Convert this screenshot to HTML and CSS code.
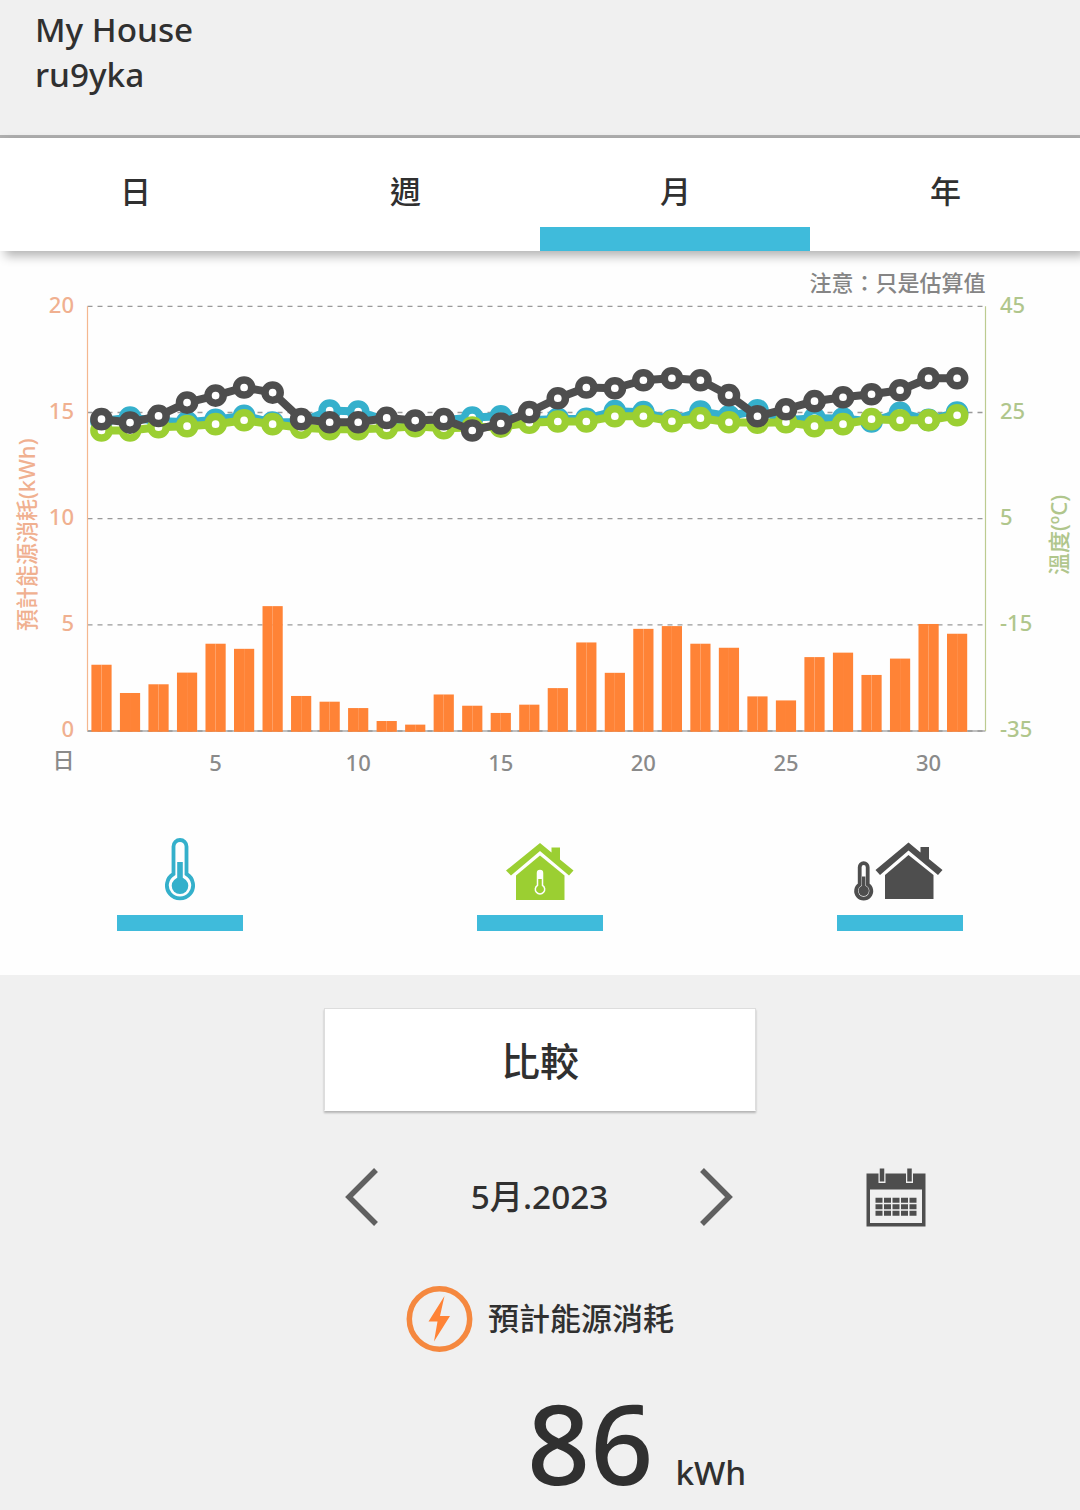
FILE: index.html
```html
<!DOCTYPE html>
<html lang="zh-Hant">
    <head>
        <meta charset="UTF-8" />
        <meta name="viewport" content="width=device-width, initial-scale=1.0" />
        <title>My House</title>
        <link rel="stylesheet" href="styles.css">
    </head>
    <body>
        <header class="header">
            <p>My House</p>
            <p>ru9yka</p>
        </header>

        <nav class="tabs">
            <a class="tab">日</a>
            <a class="tab">週</a>
            <a class="tab active">月</a>
            <a class="tab">年</a>
        </nav>

        <main class="panel">
            <svg class="chart" viewBox="0 0 1080 540">
                <text class="note" x="985.5" y="40">注意：只是估算值</text>
                <g class="grid"></g>
                <g class="bars"></g>
                <g class="lines"></g>
                <text class="label unit" x="52.5" y="517">日</text>
                <text class="title left" transform="translate(34.500 380) rotate(-90)">預計能源消耗(kWh)</text>
                <text class="title right" transform="translate(1066.500 324) rotate(-90)">溫度(ºC)</text>
            </svg>

            <div class="legend">
                <div class="item">
                    <svg class="icon set" viewBox="0 0 32 64">
                        <path class="tube" d="M9.5 37V9.500a6.5 6.5 0 0 1 13 0V37a13.1 13.1 0 1 1-13 0z" />
                        <circle cx="16" cy="48.8" r="8.3" />
                        <path d="M13.2 25h5.6V44h-5.6z" />
                    </svg>
                </div>
                <div class="item">
                    <svg class="icon house" viewBox="0 0 68 60">
                        <path d="M34 1 45.5 10.500V5.500H54V17.500L67.500 28.500 63 33.500 34 9 5 33.500 0 28.500z" />
                        <path d="M34 13.500 58.500 33.500V58H10V33.500z" />
                        <path class="bulb" d="M31.500 43.300V31a2.500 2.500 0 0 1 5 0v12.300a4.700 4.700 0 1 1-5 0z" />
                        <path class="top" d="M31.500 37v-6a2.500 2.500 0 0 1 5 0v6z" />
                    </svg>
                </div>
                <div class="item">
                    <svg class="icon outdoor" viewBox="0 0 90 60">
                        <path class="tube" d="M6.700 42.500V25.200a4 4 0 0 1 8 0v17.300a7.600 7.600 0 1 1-8 0z" />
                        <circle cx="10.700" cy="48.700" r="5.200" />
                        <path d="M9 34.500h3.400v12H9z" />
                        <path d="M55.500 0.500 67.500 10.500V5H76V17L89.500 28 85 33 55.500 8.500 27 33 22.500 28z" />
                        <path d="M55.500 13 80.500 33V57H32V33z" />
                    </svg>
                </div>
            </div>
        </main>

        <section class="summary">
            <button class="compare">比較</button>

            <div class="period">
                <svg class="arrow" viewBox="0 0 34 60">
                    <path d="M31 3 4 30l27 27" />
                </svg>
                <span class="month">5月.2023</span>
                <svg class="arrow" viewBox="0 0 34 60">
                    <path d="M3 3l27 27L3 57" />
                </svg>
                <svg class="calendar" viewBox="0 0 60 60">
                    <path d="M.5 5.500h59v53H.5zM4 21.500v33.500h52V21.500z" fill-rule="evenodd" />
                    <path class="pins" d="M16 0v15M43.500 0v15" />
                    <path class="rings" d="M16 .5v13M43.500 .5v13" />
                    <path class="days" d="M9.500 32.200h41M9.500 38.700h41M9.500 45.200h41" />
                </svg>
            </div>

            <div class="usage">
                <svg class="bolt" viewBox="0 0 66 66">
                    <circle cx="33" cy="33" r="30.200" />
                    <path d="M38 10 22 35.500h9L27.500 55.500 43.500 30h-10z" />
                </svg>
                <span>預計能源消耗</span>
            </div>

            <div class="total">
                <span class="value">86</span>
                <span class="kwh">kWh</span>
            </div>
        </section>

        <script src="script.js"></script>
    </body>
</html>
```
FILE: styles.css
```css
* {
    margin: 0;
    padding: 0;
    box-sizing: border-box;
}
body {
    background: #f0f0f0;
    color: #303030;
    font-family: 'Noto Sans', 'Noto Sans CJK TC', sans-serif;
    font-weight: 500;
}
svg {
    display: block;
}
.header {
    height: 138px;
    padding: 7px 35px 0;
    border-bottom: 3px solid #b0b0b0;
    font-size: 33.3px;
    line-height: 45px;
}
.tabs {
    height: 113px;
    display: flex;
    position: relative;
    background: #fff;
    box-shadow: 5px 5px 10px rgba(0, 0, 0, 0.3);
}
.tab {
    flex: 1;
    padding: 0 0 10px 1px;
    display: flex;
    justify-content: center;
    align-items: center;
    font-size: 31px;
    border-bottom: 0 solid #3fbbdb;
}
.tab.active {
    padding-top: 16px;
    padding-bottom: 2px;
    border-bottom-width: 24px;
}
.panel {
    height: 724px;
    background: #fefefe;
}

/* chart */
.chart {
    width: 1080px;
    height: 540px;
}
.note {
    font-size: 22px;
    fill: #858585;
    text-anchor: end;
}
.label {
    font-size: 22px;
    fill: #8a8a8a;
}
.title {
    font-size: 22px;
}
.left {
    fill: #f0b090;
}
.right {
    fill: #b0c68c;
}
.label.left {
    text-anchor: end;
}
.label.day {
    text-anchor: middle;
}
.rule {
    stroke: #999;
    stroke-width: 1.3;
    stroke-dasharray: 5 5;
}
.base {
    stroke: #aaa;
    stroke-width: 1.6;
}
.axis-left {
    stroke: #f5b78f;
    stroke-width: 1.2;
}
.axis-right {
    stroke: #bccb90;
    stroke-width: 1.2;
}
.bars {
    fill: #ff8336;
}
.lines {
    stroke-width: 7.5;
}
.lines polyline {
    fill: none;
    stroke-width: 8;
    stroke-linejoin: round;
}
.lines circle {
    fill: #fff;
}
.blue {
    stroke: #35b0cc;
}
.lime {
    stroke: #9bcf32;
}
.dark {
    stroke: #4e4e4e;
}

/* legend */
.legend {
    height: 140px;
    display: flex;
}
.item {
    flex: 1;
    display: flex;
    flex-direction: column;
    align-items: center;
    justify-content: flex-end;
}
.item::after {
    content: '';
    width: 126px;
    height: 16px;
    background: #3fbbdb;
}
.icon {
    fill: currentColor;
}
.tube {
    fill: none;
    stroke: currentColor;
    stroke-width: 3.8;
}
.set {
    width: 32px;
    height: 64px;
    margin-bottom: 14px;
    color: #34b0cb;
}
.house {
    width: 68px;
    height: 60px;
    margin: 0 1px 13px 0;
    color: #9bcf32;
}
.bulb {
    fill: none;
    stroke: #fefefe;
    stroke-width: 1.5;
}
.top {
    fill: #fefefe;
}
.outdoor {
    width: 90px;
    height: 60px;
    margin-bottom: 13px;
    margin-left: -4px;
    color: #4e4e4e;
}

/* summary */
.summary {
    display: flex;
    flex-direction: column;
}
.compare {
    width: 432px;
    height: 103px;
    margin: 33px auto 0;
    padding-bottom: 2px;
    border: 1px solid #ddd;
    border-bottom-color: #fff;
    background: #fff;
    box-shadow: 0 2px 2px rgba(0, 0, 0, 0.25);
    font: inherit;
    font-size: 39px;
    color: #303030;
}
.period {
    height: 60px;
    margin: 56px 0 0 345px;
    display: flex;
    align-items: center;
}
.arrow {
    width: 34px;
    height: 60px;
    fill: none;
    stroke: #606060;
    stroke-width: 5.5;
}
.month {
    width: 320px;
    padding: 0 0 6px 1px;
    text-align: center;
    font-size: 33.3px;
}
.calendar {
    width: 60px;
    height: 60px;
    margin: 2px 0 0 133px;
    fill: #4e4e4e;
}
.pins {
    stroke: #f0f0f0;
    stroke-width: 7;
}
.rings {
    stroke: #4e4e4e;
    stroke-width: 4.5;
}
.days {
    stroke: #4e4e4e;
    stroke-width: 5;
    stroke-dasharray: 7 1.5;
}
.usage {
    height: 66px;
    margin: 59px 0 0 406px;
    display: flex;
    align-items: center;
    gap: 16px;
    font-size: 31px;
}
.usage span {
    padding-bottom: 6px;
}
.bolt {
    width: 67px;
    height: 66px;
    margin-right: -1px;
    fill: #ff8336;
}
.bolt circle {
    fill: none;
    stroke: #f5883f;
    stroke-width: 5.5;
}
.total {
    margin: 30px 0 0 527px;
    display: flex;
    align-items: baseline;
    gap: 22px;
}
.value {
    font-size: 110.5px;
    line-height: 120px;
}
.kwh {
    font-size: 33.3px;
    line-height: 34px;
}
```
FILE: script.js
```js
const kwh = [
    3.12, 1.79, 2.2, 2.75, 4.11, 3.87, 5.88, 1.65, 1.38, 1.08, 0.47, 0.3, 1.72, 1.19, 0.85, 1.24,
    2.02, 4.17, 2.74, 4.81, 4.94, 4.11, 3.92, 1.63, 1.44, 3.48, 3.69, 2.64, 3.41, 5.04, 4.58
];

const temps = {
    blue: [
        23.35, 24.05, 23.41, 23.16, 23.62, 24.37, 23.1, 23.2, 25.37, 25.18, 23.54, 23.35, 23.54, 24.05, 24.29, 23.54,
        23.79, 23.79, 25.24, 25.05, 23.54, 25.18, 24.29, 25.42, 23.54, 23.92, 23.86, 23.3, 24.94, 23.6, 24.99
    ],
    lime: [
        21.6, 21.6, 22.22, 22.41, 22.79, 23.54, 22.79, 22.13, 21.85, 21.85, 22.04, 22.41, 22.04, 22.17, 22.34, 23.07,
        23.3, 23.3, 24.29, 24.29, 23.35, 23.92, 23.16, 23.07, 23.16, 22.41, 22.79, 23.73, 23.54, 23.54, 24.48
    ],
    dark: [
        23.73, 23.1, 24.35, 26.87, 28.19, 29.7, 28.75, 23.73, 23.16, 23.16, 23.97, 23.48, 23.73, 21.6, 22.92, 25.05,
        27.68, 29.7, 29.56, 31.07, 31.45, 31.07, 28.25, 24.29, 25.61, 27.12, 27.87, 28.43, 29.19, 31.45, 31.45
    ]
};

const left = 87.5;
const right = 985.5;
const top0 = 55.3;
const bottom = 480;
const step = 28.52;

const dayX = (i) => 101.5 + i * step;
const kwhY = (v) => bottom - (v / 20) * (bottom - top0);
const tempY = (t) => bottom - ((t + 35) / 80) * (bottom - top0);

// grid and labels
let grid = '';
for (let i = 0; i <= 4; i++) {
    const y = kwhY(i * 5);
    grid += i === 0 ? `<path class="base" d="M${left} ${y}H${right}" />` : '';
    grid += `<path class="rule" d="M${left} ${y}H${right}" />`;
    grid += `<text class="label left" x="74" y="${Math.round(y + 6.4)}">${i * 5}</text>`;
    grid += `<text class="label right" x="1000" y="${Math.round(y + 6.4)}">${i * 20 - 35}</text>`;
}
grid += `<path class="axis-left" d="M${left} ${top0}V${bottom}" />`;
grid += `<path class="axis-right" d="M${right} ${top0}V${bottom}" />`;
for (let d = 5; d <= 30; d += 5) {
    grid += `<text class="label day" x="${dayX(d - 1)}" y="520">${d}</text>`;
}
document.querySelector('.grid').innerHTML = grid;

// every bar is two halves side by side
document.querySelector('.bars').innerHTML = kwh.map((v, i) => {
    const x = dayX(i);
    const y = kwhY(v);
    const h = bottom - y + 0.8;
    return `<rect x="${x - 10.1}" y="${y}" width="10.1" height="${h}" />
            <rect x="${x}" y="${y}" width="10.1" height="${h}" />`;
}).join('');

let lines = '';
for (const name in temps) {
    const points = temps[name].map((t, i) => [dayX(i), tempY(t)]);
    lines += `<g class="${name}"><polyline points="${points.join(' ')}" />`;
    lines += points.map((p) => `<circle cx="${p[0]}" cy="${p[1]}" r="7.6" />`).join('');
    lines += '</g>';
}
document.querySelector('.lines').innerHTML = lines;
```
